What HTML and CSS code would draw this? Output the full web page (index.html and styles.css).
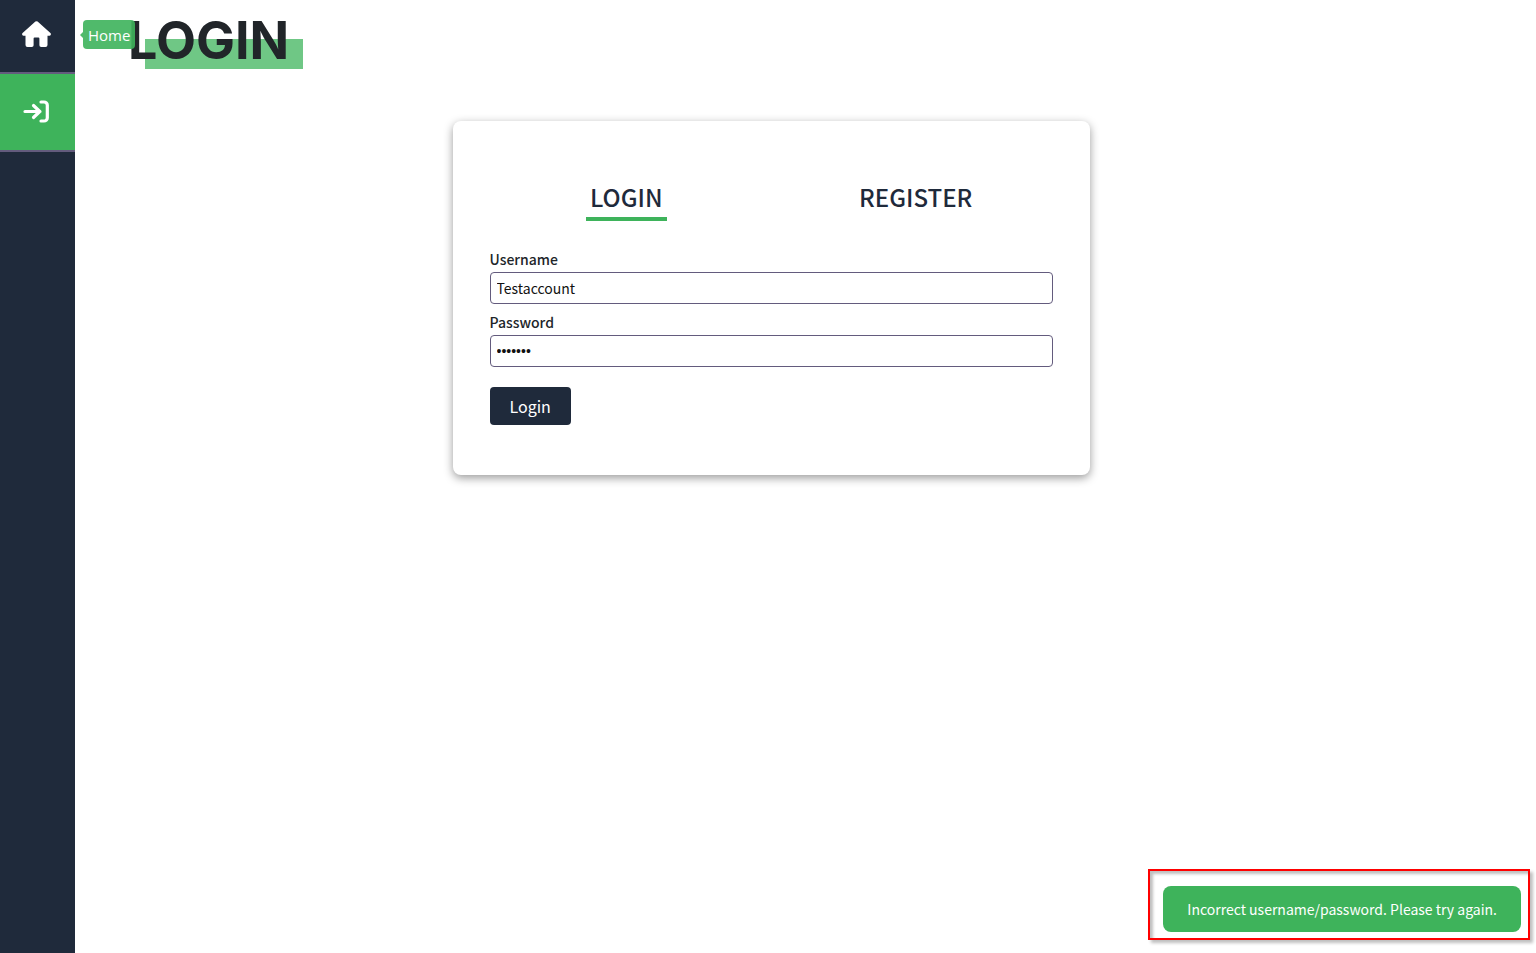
FILE: index.html
```html
<!DOCTYPE html>
<html lang="en">
<head>
<meta charset="utf-8">
<title>Login</title>
<link rel="stylesheet" href="styles.css">
</head>
<body>
<nav class="sidebar" aria-label="Main">
  <a class="nav-link" href="#home" aria-label="Home">
    <svg class="icon icon-home" viewBox="0 0 29 26" aria-hidden="true"><path fill="currentColor" d="M13.400 .6a1.700 1.700 0 0 1 2.200 0l12.800 11.300a1.600 1.600 0 0 1-1.100 2.800H25.500V24a2 2 0 0 1-2 2H19.200a1.800 1.800 0 0 1-1.800-1.800V17.600a1 1 0 0 0-1-1h-3.800a1 1 0 0 0-1 1v6.600a1.800 1.800 0 0 1-1.800 1.800H5.500a2 2 0 0 1-2-2V14.700H1.700A1.600 1.600 0 0 1 .6 11.900z"/></svg>
    <span class="tooltip" role="tooltip">Home</span>
  </a>
  <a class="nav-link active" href="#login" aria-label="Login">
    <svg class="icon icon-enter" viewBox="0 0 26 24" fill="none" stroke="currentColor" stroke-width="3.200" stroke-linecap="round" stroke-linejoin="round" aria-hidden="true"><path d="M2 11.500h15M10.500 5.500l6.300 6l-6.300 6M18 2h3a3.300 3.300 0 0 1 3.300 3.300v12.400a3.300 3.300 0 0 1-3.300 3.300H18"/></svg>
  </a>
</nav>
<main class="content">
  <h1 class="page-title">LOGIN</h1>
  <section class="card">
    <div class="tabs">
      <button class="tab selected" type="button">LOGIN</button>
      <button class="tab" type="button">REGISTER</button>
    </div>
    <form class="form">
      <label class="label" for="username">Username</label>
      <input class="field" id="username" type="text" value="Testaccount">
      <label class="label" for="password">Password</label>
      <input class="field field-password" id="password" type="password" value="testing">
      <button class="submit" type="button">Login</button>
    </form>
  </section>
</main>
<div class="highlight">
  <div class="toast" role="alert">Incorrect username/password. Please try again.</div>
</div>
</body>
</html>
```
FILE: styles.css
```css
:root {
  --navy: #1f2a3b;
  --green: #3eb35b;
  --purple: #635b7d;
}
* { box-sizing: border-box; }
body {
  margin: 0;
  min-height: 100vh;
  display: flex;
  background: #fff;
  color: #212529;
  font: 14px/24px "Noto Sans CJK SC", "Noto Sans", sans-serif;
}
button, input { font: inherit; }
.sidebar {
  flex: 0 0 75px;
  background: var(--navy);
}
.nav-link {
  position: relative;
  display: flex;
  align-items: center;
  justify-content: center;
  height: 78px;
  padding-right: 3px;
  border-bottom: 2px solid var(--purple);
  color: #fff;
}
.nav-link:first-child { height: 74px; padding-bottom: 4px; }
.nav-link.active { background: var(--green); }
.icon { display: block; width: 26px; height: 24px; overflow: visible; }
.icon-home { width: 29px; height: 26px; }
.tooltip {
  position: absolute;
  z-index: 1;
  left: 83px;
  top: 20px;
  height: 29px;
  padding: 0 5px;
  border-radius: 4px;
  background: var(--green);
  opacity: .9;
  font: 15px/30px "Open Sans", sans-serif;
}
.tooltip::before {
  content: "";
  position: absolute;
  right: 100%;
  top: 12px;
  border: 3px solid transparent;
  border-left: 0;
  border-right-color: var(--green);
}
.content {
  flex: 1;
  display: flex;
  flex-direction: column;
  align-items: center;
  padding: 16px 69px 40px 0;
}
.page-title {
  align-self: flex-start;
  margin: 0 0 52px 53px;
  padding-right: 14px;
  height: 53px;
  font: 700 52px/50px Inter, sans-serif;
  background: linear-gradient(#6fc785, #6fc785) 17px 23px / 100% 30px no-repeat;
}
.card {
  width: 100%;
  max-width: 637px;
  padding: 56px 37px 50px;
  border-radius: 8px;
  box-shadow: 0 3px 10px rgba(0, 0, 0, .4);
}
.tabs {
  display: grid;
  grid-template-columns: 1fr 1fr;
  justify-items: center;
  margin: 0 -8px 26px;
}
.tab {
  padding: 0 4px;
  border: 0;
  border-bottom: 4px solid transparent;
  background: none;
  color: var(--navy);
  font-size: 24px;
  font-weight: 500;
  line-height: 40px;
}
.tab.selected { border-color: var(--green); }
.form { display: flex; flex-direction: column; }
.label { font-weight: 500; line-height: 25px; }
.field {
  width: 100%;
  height: 32px;
  margin-bottom: 6px;
  padding: 0 6px;
  border: 1px solid var(--purple);
  border-radius: 4px;
  background: #fff;
  color: #111;
}
.field-password { font-family: "Liberation Sans", sans-serif; }
.submit {
  align-self: flex-start;
  margin-top: 14px;
  padding: 0 20px;
  border: 0;
  border-radius: 4px;
  background: var(--navy);
  color: #fff;
  font-size: 16px;
  line-height: 38px;
}
.highlight {
  position: fixed;
  right: 6px;
  bottom: 13px;
  padding: 15px 7px 6px 13px;
  border: 2px solid #f00;
  box-shadow: 3px 3px 3px rgba(0, 0, 0, .25), inset 3px 3px 3px rgba(0, 0, 0, .25);
}
.toast {
  padding: 11px 24px;
  border-radius: 8px;
  background: var(--green);
  color: #fff;
}
```
